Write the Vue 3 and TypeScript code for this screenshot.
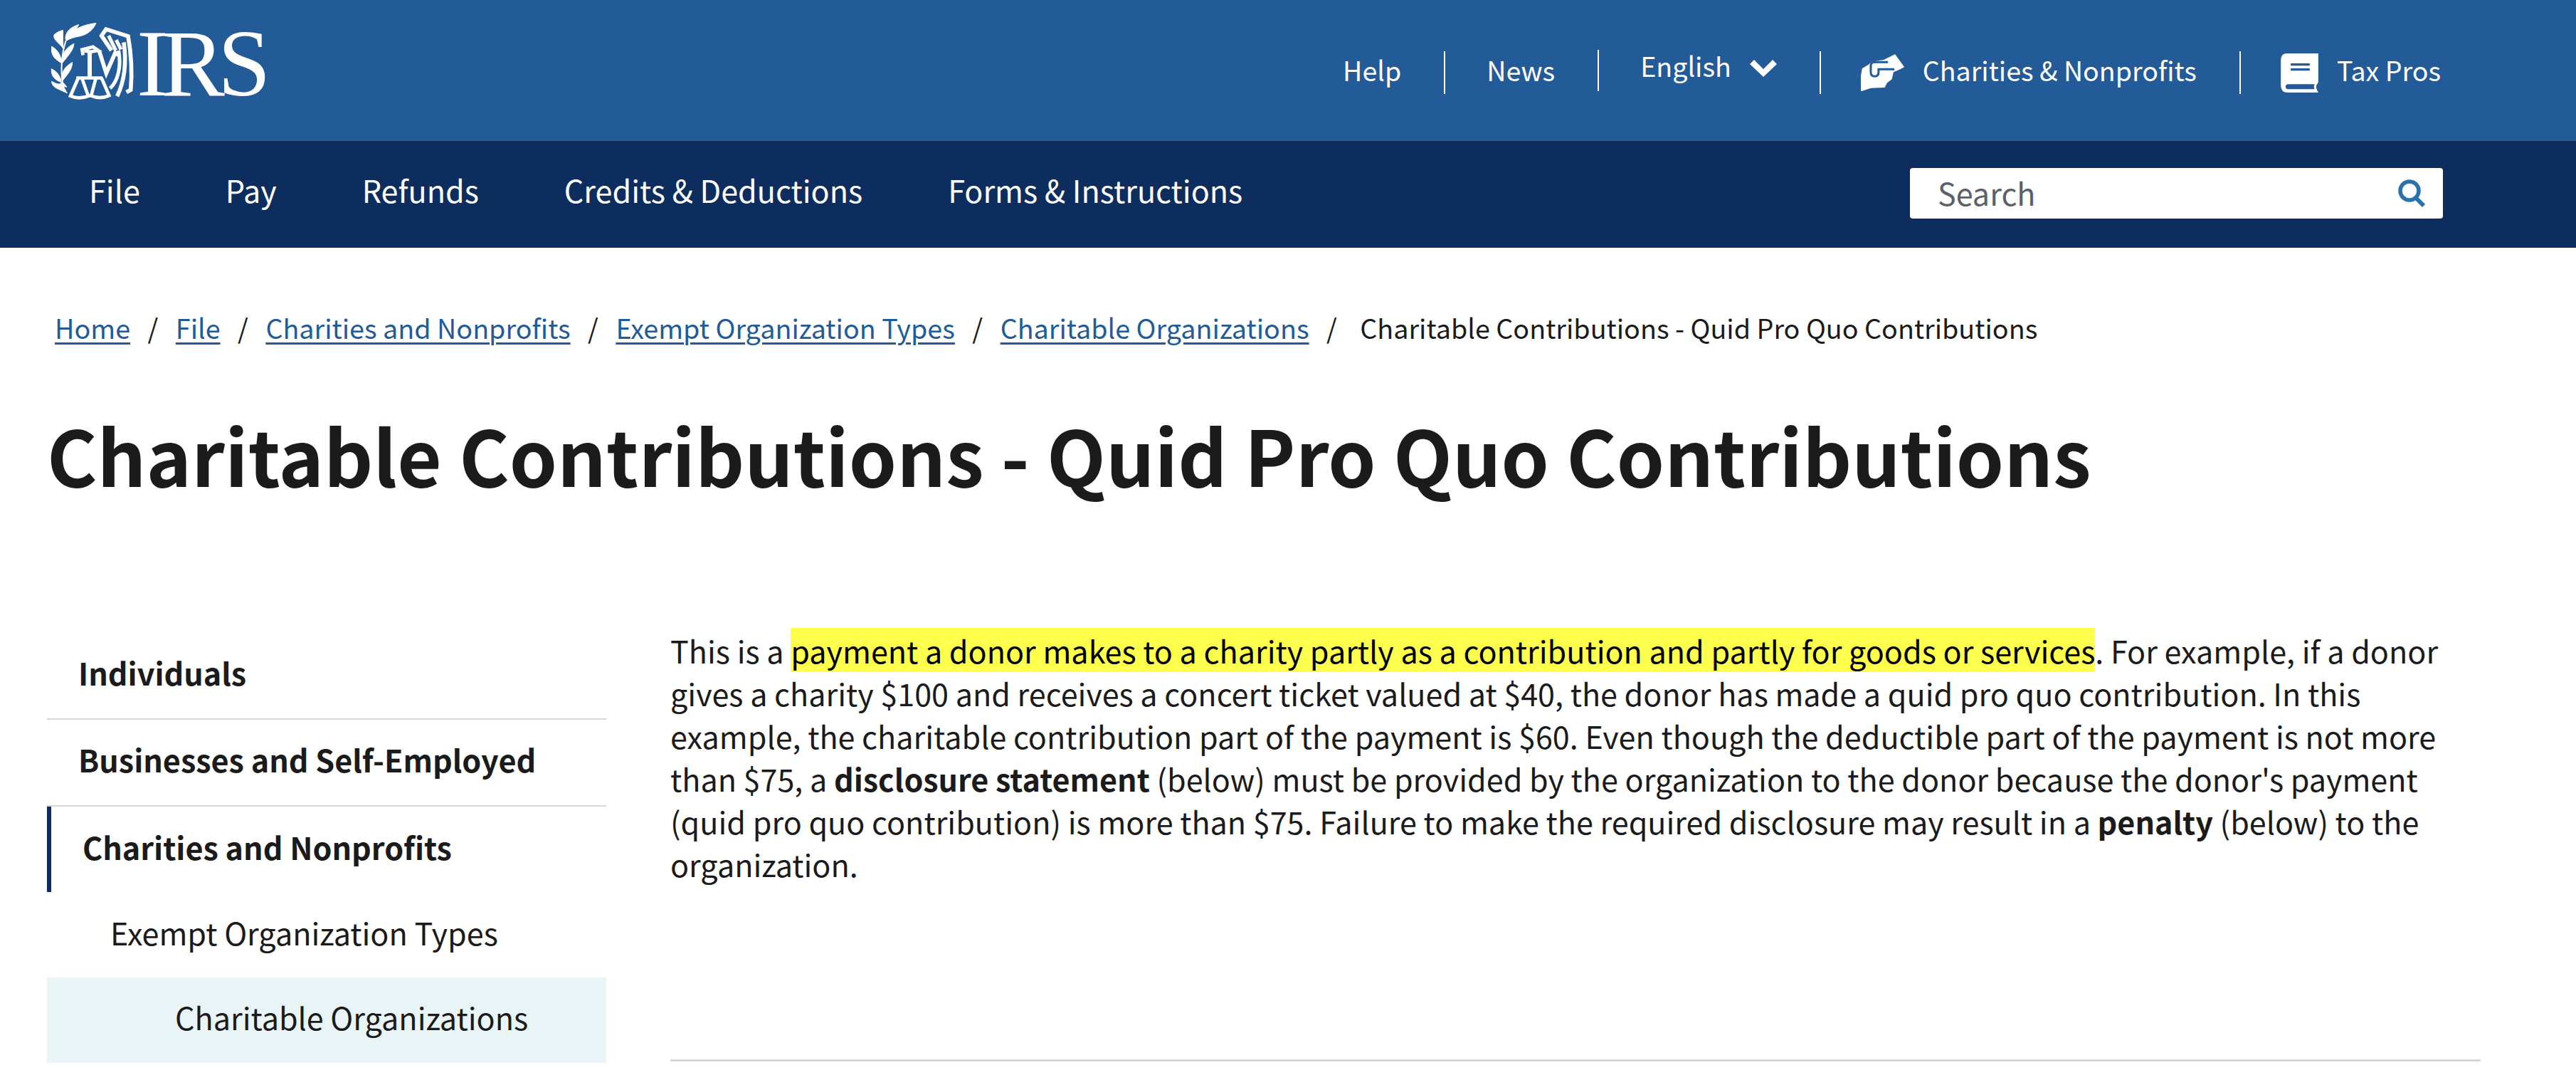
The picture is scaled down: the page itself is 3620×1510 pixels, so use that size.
<script setup lang="ts">
const navItems: string[] = ['File', 'Pay', 'Refunds', 'Credits & Deductions', 'Forms & Instructions']
const crumbs: string[] = ['Home', 'File', 'Charities and Nonprofits', 'Exempt Organization Types', 'Charitable Organizations']
</script>

<template>
  <div class="page">
    <header class="top">
      <a class="logo">
        <svg class="seal" viewBox="210 90 360 335" aria-hidden="true">
          <g fill="#fff" stroke="#fff" stroke-width="3">
            <path d="M278 172C292 135 330 106 405 97C392 128 365 146 336 152C315 156 295 161 278 172Z" />
            <path d="M276 166C274 133 298 114 332 103C322 125 305 143 276 166Z" />
            <path d="M265 127L266 204C255 184 222 168 228 146C236 138 250 130 265 127Z" />
            <path d="M312 183C310 212 285 236 262 266C257 225 280 200 312 183Z" />
            <path d="M218 195C236 205 258 226 260 266C240 252 212 240 218 195Z" />
            <path d="M305 262C305 292 285 312 262 342C255 302 275 280 305 262Z" />
            <path d="M217 290C236 298 257 320 258 346C235 337 215 325 217 290Z" />
            <path d="M218 342C235 352 256 362 262 342L282 366L268 364L283 392L240 372C225 364 218 355 218 342Z" />
          </g>
          <path d="M264 350C256 300 258 230 278 170" fill="none" stroke="#fff" stroke-width="6" />
          <g fill="none" stroke="#fff" stroke-linejoin="miter">
            <path d="M470 212L428 150L447 123L540 152C554 230 558 300 551 378L533 388" stroke-width="17" />
            <path d="M458 150L488 212M490 168L510 208" stroke-width="15" />
            <path d="M522 178C532 250 530 330 494 405" stroke-width="17" />
            <path d="M500 212C512 280 498 340 464 372" stroke-width="15" />
            <path d="M418 214L448 308L486 222L500 232" stroke-width="17" />
            <path d="M350 232L346 209L392 197L414 212L382 218L356 214" stroke-width="14" />
            <path d="M378 218V330" stroke-width="18" />
            <path d="M322 328H432" stroke-width="14" />
            <path d="M330 328L297 404Q336 420 380 402Q424 420 460 402L428 328M346 330L372 404M404 330L384 404" stroke-width="14" />
          </g>
        </svg>
        <span class="irs">IRS</span>
      </a>
      <nav class="utility">
        <a class="u-item"><span class="u-text">Help</span></a>
        <a class="u-item news"><span class="u-text">News</span></a>
        <a class="u-item lang"><span class="u-text">English</span>
          <svg class="chev" viewBox="0 0 38 24" aria-hidden="true"><path d="M0 6L6 0L19 13L32 0L38 6L19 24Z" fill="#fff" /></svg>
        </a>
        <a class="u-item charities">
          <svg class="hand" viewBox="33 28 184 160" aria-hidden="true">
            <path d="M36 182V120L41 91L67 75L82 63L131 55L177 32L213 82L194 92L169 102L162 133L142 148L132 167L75 169Z" fill="#fff" stroke="#fff" stroke-width="6" stroke-linejoin="round" />
            <path d="M148 62H92Q75 62 75 78V105Q75 122 92 122Q108 122 108 105V92H175" fill="none" stroke="#225b98" stroke-width="9" />
          </svg>
          <span class="u-text">Charities &amp; Nonprofits</span>
        </a>
        <a class="u-item tax">
          <svg class="book" viewBox="30 25 158 165" aria-hidden="true">
            <path d="M58 25H188V148Q176 160 180 172Q182 180 188 190H60Q30 190 30 160V53Q30 25 58 25Z" fill="#fff" />
            <path d="M72 67H152V77H72ZM72 88H152V98H72Z" fill="#225b98" />
            <path d="M62 155H172Q168 165 172 176H62Q50 176 50 165.500Q50 155 62 155Z" fill="#225b98" />
          </svg>
          <span class="u-text">Tax Pros</span>
        </a>
      </nav>
    </header>

    <div class="mainnav">
      <a v-for="item in navItems" :key="item" class="nav-link">{{ item }}</a>
      <div class="search">
        <span class="placeholder">Search</span>
        <svg class="glass" viewBox="0 0 40 40" aria-hidden="true">
          <circle cx="18" cy="16" r="13" fill="none" stroke="#2b72ad" stroke-width="5.500" />
          <path d="M27 26L38 37" stroke="#2b72ad" stroke-width="6" />
        </svg>
      </div>
    </div>

    <div class="crumbs">
      <template v-for="c in crumbs" :key="c">
        <a class="crumb">{{ c }}</a>
        <span class="slash">/</span>
      </template>
      <span class="current">Charitable Contributions - Quid Pro Quo Contributions</span>
    </div>

    <h1 class="title">Charitable Contributions - Quid Pro Quo Contributions</h1>

    <div class="columns">
      <aside class="side">
        <a class="side-item sep strong">Individuals</a>
        <a class="side-item sep strong">Businesses and Self-Employed</a>
        <a class="side-item active strong">Charities and Nonprofits</a>
        <a class="side-item lvl2">Exempt Organization Types</a>
        <a class="side-item lvl3">Charitable Organizations</a>
      </aside>
      <main class="content">
        <p class="para">This is a <mark class="hl">payment a donor makes to a charity partly as a contribution and partly for goods or services</mark>. For example, if a donor gives a charity $100 and receives a concert ticket valued at $40, the donor has made a quid pro quo contribution. In this example, the charitable contribution part of the payment is $60. Even though the deductible part of the payment is not more than $75, a <strong>disclosure statement</strong> (below) must be provided by the organization to the donor because the donor's payment (quid pro quo contribution) is more than $75. Failure to make the required disclosure may result in a <strong>penalty</strong> (below) to the organization.</p>
        <hr class="rule" />
      </main>
    </div>
  </div>
</template>

<style>
html, body { margin: 0; background: #fff; overflow: hidden; }
</style>

<style scoped>
.page {
  width: 3620px;
  height: 1510px;
  overflow: hidden;
  font-family: "Noto Sans CJK SC", "Noto Sans CJK JP", sans-serif;
  color: #1b1b1b;
  font-size: 43.1px;
}
a { color: inherit; text-decoration: none; }
.top {
  height: 198px;
  background: #225b98;
  display: flex;
  justify-content: space-between;
  color: #fff;
}
.logo { display: flex; align-items: flex-start; padding: 30px 0 0 70px; }
.seal { width: 120px; height: 112px; display: block; }
.irs {
  font-family: "Liberation Serif", serif;
  font-size: 134px;
  line-height: 118px;
  letter-spacing: -10px;
  margin-left: 2px;
}
.utility { display: flex; align-items: flex-start; padding: 72px 190px 0 0; }
.u-item {
  display: flex;
  align-items: center;
  height: 60px;
  padding: 0 60px;
  border-left: 2px solid #fff;
  font-size: 37.6px;
  white-space: nowrap;
}
.u-text { margin-bottom: 10px; }
.u-item:first-child { border-left: 0; }
.u-item:last-child { padding-right: 0; }
.news { padding-left: 58px; }
.tax { padding-left: 56px; }
.charities { padding-left: 56px; }
.lang { height: 58px; margin-top: -2px; padding-left: 58px; padding-bottom: 6px; box-sizing: border-box; }
.chev { width: 38px; height: 24px; margin-left: 26px; }
.hand { width: 61px; height: 53px; margin-right: 26px; }
.book { width: 53px; height: 55px; margin-right: 26px; }
.mainnav {
  height: 150px;
  box-sizing: border-box;
  padding: 0 187px 3px 125px;
  background: #0e2d5f;
  display: flex;
  align-items: center;
  gap: 120px;
  color: #fff;
}
.nav-link { font-size: 43.1px; white-space: nowrap; padding-bottom: 12px; }
.search {
  margin-left: auto;
  width: 749px;
  height: 71px;
  box-sizing: border-box;
  background: #fff;
  border-radius: 4px;
  display: flex;
  align-items: center;
  justify-content: space-between;
  padding: 0 25px 0 39px;
}
.placeholder { color: #5b616b; font-size: 43.1px; padding-bottom: 4px; }
.glass { width: 40px; height: 40px; }
.crumbs {
  display: flex;
  align-items: baseline;
  padding: 82px 0 0 77px;
  font-size: 37.7px;
  line-height: 60px;
  white-space: nowrap;
}
.crumb { color: #225b98; text-decoration: underline; text-decoration-thickness: 3px; text-underline-offset: 5px; }
.slash { margin: 0 24.5px; }
.current { margin-left: 8px; }
.title {
  margin: 0;
  padding: 82px 0 0 66px;
  font-size: 107.6px;
  line-height: 130px;
  font-weight: 700;
  white-space: nowrap;
}
.columns {
  display: flex;
  padding: 187px 0 0 66px;
}
.side { width: 786px; flex: none; display: flex; flex-direction: column; font-size: 43.1px; }
.side-item { height: 120px; line-height: 110px; padding-left: 44px; display: block; }
.sep { border-bottom: 2px solid #d6d7d9; }
.strong { font-weight: 700; }
.active { border-left: 6px solid #0e2d5f; padding-left: 44px; line-height: 112px; }
.lvl2 { padding-left: 89px; line-height: 112px; }
.lvl3 { padding-left: 180px; background: #e8f4f6; }
.content { margin-left: 90px; width: 2544px; flex: none; }
.para { margin: -6px 0 0; font-size: 43.1px; line-height: 60px; }
.hl { background: #ffff4d; color: #000; }
.para strong { font-weight: 700; }
.rule { border: 0; border-top: 3px solid #d6d7d9; margin: 245px 0 0; }
</style>
